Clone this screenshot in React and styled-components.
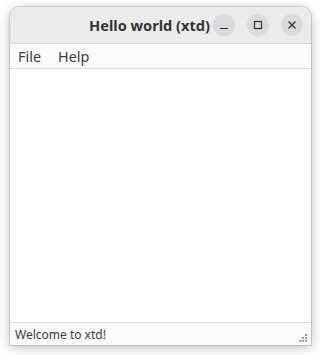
import React from "react";
import styled, { createGlobalStyle } from "styled-components";

const GlobalStyle = createGlobalStyle`
    html, body {
        margin: 0;
        padding: 0;
        background: #ffffff;
        font-family: "Noto Sans", "DejaVu Sans", sans-serif;
    }
`;

export default function App() {
    return (
        <>
            <GlobalStyle />
            <Page>
                <Window>
                    <TitleBar>
                        <Title>Hello world (xtd)</Title>
                        <Controls>
                            <WinButton aria-label="Minimize">
                                <svg width="10" height="10" viewBox="0 0 10 10">
                                    <line x1="1" y1="8.5" x2="9" y2="8.5" stroke="#2e2e2e" strokeWidth="1.2" />
                                </svg>
                            </WinButton>
                            <WinButton aria-label="Maximize">
                                <svg width="10" height="10" viewBox="0 0 10 10">
                                    <rect x="1.5" y="1.5" width="7" height="7" fill="none" stroke="#2e2e2e" strokeWidth="1.2" />
                                </svg>
                            </WinButton>
                            <WinButton aria-label="Close">
                                <svg width="10" height="10" viewBox="0 0 10 10">
                                    <path d="M1.5 1.5 L8.5 8.5 M8.5 1.5 L1.5 8.5" stroke="#2e2e2e" strokeWidth="1.3" />
                                </svg>
                            </WinButton>
                        </Controls>
                    </TitleBar>
                    <MenuBar>
                        <MenuItem>File</MenuItem>
                        <MenuItem>Help</MenuItem>
                    </MenuBar>
                    <Content />
                    <StatusBar>
                        <StatusText>Welcome to xtd!</StatusText>
                        <Grip width="10" height="10" viewBox="0 0 10 10">
                            {[[7, 1], [4, 4], [7, 4], [1, 7], [4, 7], [7, 7]].map(([x, y]) => (
                                <rect key={`${x}-${y}`} x={x} y={y} width="2" height="2" fill="#9a9a9a" />
                            ))}
                        </Grip>
                    </StatusBar>
                </Window>
            </Page>
        </>
    );
}

const Page = styled.div`
    width: 320px;
    height: 355px;
    box-sizing: border-box;
    padding: 7px 9px 10px 10px;
    overflow: hidden;
`;

const Window = styled.div`
    height: 100%;
    display: flex;
    flex-direction: column;
    border-radius: 10px 10px 0 0;
    background: #ffffff;
    box-shadow: 0 2px 12px rgba(0, 0, 0, 0.28), 0 0 0 1px rgba(0, 0, 0, 0.12);
    overflow: hidden;
`;

const TitleBar = styled.div`
    height: 37px;
    flex: none;
    display: flex;
    align-items: center;
    padding: 0 8px 0 0;
    background: #ebebeb;
    border-bottom: 1px solid #d6d6d6;
    box-sizing: border-box;
`;

const Title = styled.div`
    margin-left: auto;
    margin-right: 3px;
    font-size: 14.6px;
    font-weight: 700;
    color: #353535;
    white-space: nowrap;
`;

const Controls = styled.div`
    display: flex;
    gap: 12px;
`;

const WinButton = styled.button`
    width: 22px;
    height: 22px;
    padding: 0;
    border: none;
    border-radius: 50%;
    background: #dadada;
    display: flex;
    align-items: center;
    justify-content: center;
`;

const MenuBar = styled.div`
    height: 25px;
    flex: none;
    display: flex;
    align-items: center;
    gap: 17px;
    padding: 0 8px;
    background: #fafafa;
    border-bottom: 1px solid #dcdcdc;
    box-sizing: border-box;
`;

const MenuItem = styled.span`
    font-size: 14.4px;
    color: #3c3c3c;
`;

const Content = styled.div`
    flex: 1;
    background: #ffffff;
`;

const StatusBar = styled.div`
    height: 23px;
    flex: none;
    display: flex;
    align-items: center;
    justify-content: space-between;
    padding: 0 3px 0 5px;
    background: #fafafa;
    border-top: 1px solid #dcdcdc;
    box-sizing: border-box;
`;

const StatusText = styled.span`
    font-size: 12px;
    color: #3c3c3c;
`;

const Grip = styled.svg`
    align-self: flex-end;
    margin-bottom: 2px;
`;
